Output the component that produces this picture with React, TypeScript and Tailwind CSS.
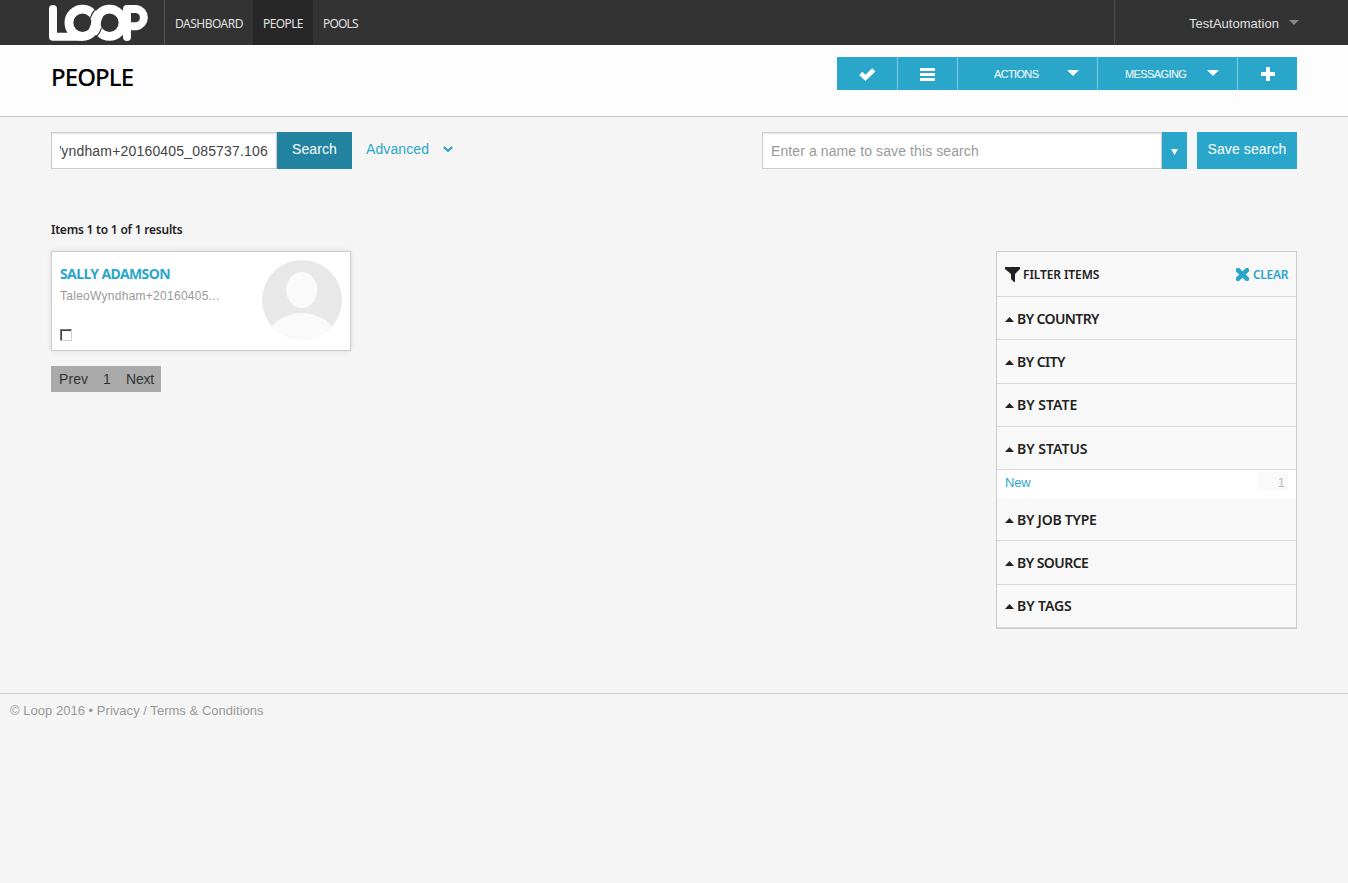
import React from "react";

const myriad = "font-['Noto_Sans','Open_Sans',sans-serif]";

function Label({ children, w, className = "" }: { children: React.ReactNode; w: string; className?: string }) {
  return <span className={`block whitespace-nowrap ${w} ${className}`}>{children}</span>;
}

function Logo() {
  return (
    <svg width="102" height="38" viewBox="0 0 102 38" fill="none" stroke="#fff" strokeWidth="8">
      <path d="M5 5V32.7H34" strokeLinecap="round" strokeLinejoin="round" />
      <circle cx="34.5" cy="18.8" r="13.6" strokeWidth="8.8" />
      <circle cx="61.5" cy="18.8" r="13.6" strokeWidth="8.8" />
      <path d="M44.5 28C47 24 49 13.6 51.5 9.6" strokeWidth="9" />
      <path d="M79 33V5H88.5A8.7 8.7 0 0 1 88.5 22.2H80" strokeLinecap="round" strokeLinejoin="round" />
      <path d="M48 4.5C45 7.5 43.2 10.5 42.4 14M53.6 23.6C52.8 27 51.2 30 48.2 33" stroke="#333" strokeWidth="1.1" />
    </svg>
  );
}

function Down({ className }: { className: string }) {
  return (
    <svg className={className} viewBox="0 0 12 6" preserveAspectRatio="none" fill="currentColor">
      <path d="M0 0H12L6 6Z" />
    </svg>
  );
}

type FilterGroup = { name: string; w: string; h: string; ls: string };

const before: FilterGroup[] = [
  { name: "BY COUNTRY", w: "w-[82px]", h: "h-[43px] pt-px", ls: "tracking-[-0.6px]" },
  { name: "BY CITY", w: "w-[49px]", h: "h-[44px]", ls: "tracking-[-0.55px]" },
  { name: "BY STATE", w: "w-[61px]", h: "h-[43px]", ls: "tracking-[0px]" },
  { name: "BY STATUS", w: "w-[71px]", h: "h-[43px] pt-px", ls: "tracking-[0px]" },
];
const after: FilterGroup[] = [
  { name: "BY JOB TYPE", w: "w-[80px]", h: "h-[43px] pt-px", ls: "tracking-[-0.25px]" },
  { name: "BY SOURCE", w: "w-[72px]", h: "h-[44px]", ls: "tracking-[-0.55px]" },
  { name: "BY TAGS", w: "w-[55px]", h: "h-[43px]", ls: "tracking-[-0.1px]" },
];

function Group({ g }: { g: FilterGroup }) {
  return (
    <div className={`flex items-center border-b border-[#d8d8d8] pl-2 ${g.h}`}>
      <svg width="9" height="5" viewBox="0 0 9 5" className="mr-[3px] mt-px"><path d="M0 5L4.5 0L9 5Z" fill="#222" /></svg>
      <Label w={g.w} className={`${myriad} ${g.ls} text-[14px] leading-[20px] font-semibold`}>{g.name}</Label>
    </div>
  );
}

export default function App() {
  return (
    <div className="h-[883px] w-[1348px] overflow-hidden bg-[#f5f5f5] font-['Liberation_Sans',Arial,sans-serif] text-[#222]">
      <header className="flex h-[45px] bg-[#333] text-[#e0e0e0]">
        <div className="w-[165px] shrink-0 border-r border-[#555] pt-1 pl-12"><Logo /></div>
        <nav className={`flex text-[12px] leading-[47px] ${myriad}`}>
          <div className="w-[88px] pl-[10px]"><Label w="w-[68px]" className="tracking-[-0.5px]">DASHBOARD</Label></div>
          <div className="w-[60px] bg-[#272727] pl-[10px]"><Label w="w-[40px]" className="tracking-[-0.6px]">PEOPLE</Label></div>
          <div className="pl-[10px]"><Label w="w-[36px]" className="tracking-[-0.8px]">POOLS</Label></div>
        </nav>
        <div className="ml-auto flex w-[234px] border-l border-[#4d4d4d] pl-[74px]">
          <span className="w-[91px] text-[13px] leading-[47px] tracking-[0.02px]">TestAutomation</span>
          <Down className="mt-5 ml-[9px] h-[5px] w-[10px] text-[#888]" />
        </div>
      </header>

      <section className="flex h-[72px] justify-between border-b border-[#ccc] bg-[#fdfdfd] pt-3 pr-[51px] pl-[51px]">
        <h1 className={`${myriad} text-[24px] leading-[40px] font-medium tracking-[-0.9px] text-black`}>PEOPLE</h1>
        <div className="flex h-[33px] bg-[#2ba6cb] text-[11px] text-white">
          <div className="flex w-[61px] items-center justify-center border-r border-[#80cae0] pt-[2px]">
            <svg width="17" height="13" viewBox="0 0 17 13"><path d="M1.8 5.4L6.4 9.8L14.8 1.8" fill="none" stroke="#fff" strokeWidth="4.6" /></svg>
          </div>
          <div className="flex w-[60px] items-center justify-center border-r border-[#80cae0] pt-[2px]">
            <svg width="15" height="13" viewBox="0 0 15 13" fill="#fff"><path d="M0 0H15V3H0ZM0 5H15V8H0ZM0 10H15V13H0Z" /></svg>
          </div>
          <div className="flex w-[140px] border-r border-[#80cae0] pl-9">
            <span className="w-[45px] leading-[34px] tracking-[-0.65px]">ACTIONS</span>
            <Down className="mt-[13px] ml-7 h-[6px] w-[12px]" />
          </div>
          <div className="flex w-[140px] border-r border-[#80cae0] pl-[27px]">
            <span className="w-[61px] leading-[34px] tracking-[-0.6px]">MESSAGING</span>
            <Down className="mt-[13px] ml-[21px] h-[6px] w-[12px]" />
          </div>
          <div className="flex w-[59px] items-center justify-center pt-px">
            <svg width="14" height="14" viewBox="0 0 14 14" fill="#fff"><path d="M5 0H9V5H14V9H9V14H5V9H0V5H5Z" /></svg>
          </div>
        </div>
      </section>

      <main className="h-[576px] px-[51px] pt-[15px]">
        <div className="flex h-[37px] text-[14px]">
          <div className="flex w-[226px] justify-end overflow-hidden border border-[#ccc] bg-white pr-2 pl-2 leading-[36px] text-[#444] shadow-[inset_0_1px_2px_rgba(0,0,0,0.1)]">
            <div className="flex w-[208px] shrink-0 justify-end overflow-hidden"><span className="tracking-[0.18px]">Wyndham+20160405_085737.106</span></div>
          </div>
          <button className="w-[75px] bg-[#2284a1] pb-[3px] tracking-[0.1px] text-white">Search</button>
          <span className="ml-[14px] w-[64px] leading-[34px] tracking-[0.1px] text-[#2ba6cb]">Advanced</span>
          <svg width="10" height="7" viewBox="0 0 10 7" className="mt-[14px] ml-[13px]"><path d="M0.8 1.2L5 4.8L9.2 1.2" fill="none" stroke="#2ba6cb" strokeWidth="2.2" /></svg>
          <div className="ml-auto w-[400px] border border-[#ccc] bg-white pl-2 leading-[36px] tracking-[0.1px] text-[#999] shadow-[inset_0_1px_2px_rgba(0,0,0,0.1)]">Enter a name to save this search</div>
          <div className="flex w-[25px] items-center justify-center bg-[#2ba6cb] pt-[2px] pr-px"><Down className="h-[6px] w-[7px] text-white" /></div>
          <button className="ml-[10px] w-[100px] bg-[#2ba6cb] pb-[3px] tracking-[0.1px] text-white">Save search</button>
        </div>

        <div className={`mt-[50px] h-[32px] text-[12px] leading-[22px] font-semibold ${myriad}`}><Label w="w-[132px]" className="tracking-[-0.22px]">Items 1 to 1 of 1 results</Label></div>

        <div className="flex justify-between">
          <div>
            <article className="flex h-[100px] w-[300px] justify-between border border-[#ccc] bg-white pt-2 pr-2 pl-2 shadow-[0_0_5px_rgba(0,0,0,0.1)]">
              <div>
                <h2 className={`${myriad} text-[14px] leading-[28px] font-bold tracking-[-0.6px] text-[#2ba6cb]`}>SALLY ADAMSON</h2>
                <p className="text-[12px] leading-[16px] tracking-[0.27px] text-[#999]">TaleoWyndham+20160405...</p>
                <div className="mt-[25px] h-3 w-3 border border-t-[#777] border-r-[#d4d0c8] border-b-[#d4d0c8] border-l-[#777]"><div className="h-full w-full border-t border-l border-[#404040]" /></div>
              </div>
              <svg width="80" height="80" viewBox="0 0 80 80">
                <circle cx="40" cy="40" r="40" fill="#e8e8e8" />
                <ellipse cx="39.8" cy="30" rx="15.5" ry="18" fill="#fafafa" />
                <path d="M10 66.5C25 48.5 55 48.5 70 66.5A40 40 0 0 1 10 66.5Z" fill="#fafafa" />
              </svg>
            </article>
            <div className="mt-[15px] flex h-[26px] w-[110px] bg-[#aaa] pl-2 text-[14px] leading-[26px] text-[#333]">
              <span className="w-[44px] tracking-[0.1px]">Prev</span><span className="w-[23px]">1</span><span className="tracking-[-0.2px]">Next</span>
            </div>
          </div>

          <aside className="h-[378px] w-[301px] border border-b-2 border-[#ccc] bg-[#f8f8f8]">
            <div className={`flex h-[45px] items-center border-b border-[#d8d8d8] pt-px pr-[7px] pl-2 text-[12px] font-semibold ${myriad}`}>
              <svg width="15" height="15" viewBox="0 0 15 15" className="mr-[3px]"><path d="M0 0H15V2L10 7V15H9L6 12V7L0 2Z" fill="#222" /></svg>
              <Label w="w-[77px]" className="tracking-[-0.08px]">FILTER ITEMS</Label>
              <svg width="13" height="13" viewBox="0 0 13 13" className="ml-auto mr-[4px]"><path d="M2 2.2L11 10.8M11 2.2L2 10.8" stroke="#2ba6cb" strokeWidth="4.6" strokeLinecap="square" /></svg>
              <Label w="w-[36px]" className="tracking-[-0.3px] text-[#2ba6cb]">CLEAR</Label>
            </div>
            {before.map((g) => <Group key={g.name} g={g} />)}
            <div className="flex h-[28px] justify-between bg-white pr-2 pl-2 text-[13px] leading-[25px] text-[#2ba6cb]">
              <span className="tracking-[-0.2px]">New</span>
              <span className="mt-[2px] h-[19px] w-[30px] rounded-[3px] bg-[#fafafa] pr-[3px] text-right leading-[21px] text-[#bbb]">1</span>
            </div>
            {after.map((g) => <Group key={g.name} g={g} />)}
          </aside>
        </div>
      </main>
      <footer className="border-t border-[#ccc] pl-[10px] text-[13px] leading-[33px] tracking-[0.03px] text-[#999]">© Loop 2016 • Privacy / Terms &amp; Conditions</footer>
    </div>
  );
}
